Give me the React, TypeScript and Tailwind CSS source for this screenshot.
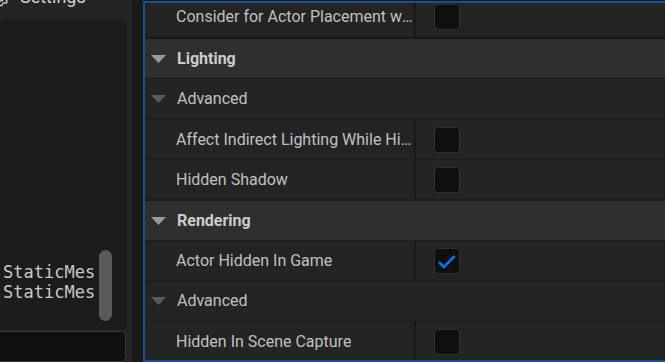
import { Settings } from 'lucide-react';

type Row =
  | { kind: 'header'; label: string; cls: string }
  | { kind: 'sub'; label: string; cls: string }
  | { kind: 'prop'; label: string; checked: boolean; cls: string };

const rows: Row[] = [
  { kind: 'prop', label: 'Consider for Actor Placement when Hovering', checked: false, cls: 'h-[42px] -mt-[6px] border-b-2' },
  { kind: 'header', label: 'Lighting', cls: 'h-[40px] border-b' },
  { kind: 'sub', label: 'Advanced', cls: 'h-[41px] border-b' },
  { kind: 'prop', label: 'Affect Indirect Lighting While Hidden', checked: false, cls: 'h-[40px] border-b' },
  { kind: 'prop', label: 'Hidden Shadow', checked: false, cls: 'h-[41px] border-b-2' },
  { kind: 'header', label: 'Rendering', cls: 'h-[40px] border-b' },
  { kind: 'prop', label: 'Actor Hidden In Game', checked: true, cls: 'h-[40px] border-b' },
  { kind: 'sub', label: 'Advanced', cls: 'h-[41px] border-b' },
  { kind: 'prop', label: 'Hidden In Scene Capture', checked: false, cls: 'h-[40px] border-b' },
];

function Arrow({ light }: { light?: boolean }) {
  return (
    <svg width="15" height="8" viewBox="0 0 15 8" className="ml-[6px] mr-[11px] shrink-0">
      <path d="M0 0 H15 L7.5 8 Z" fill={light ? '#9a9a9a' : '#5a5a5a'} />
    </svg>
  );
}

function Checkbox({ checked }: { checked: boolean }) {
  return (
    <div className="ml-[18px] w-[26px] h-[26px] rounded-[4px] border border-[#303030] bg-[#0f0f0f] flex items-center justify-center">
      {checked && (
        <svg width="26" height="26" viewBox="0 0 26 26">
          <path d="M5 15 L9.5 19.5 L20.5 8.5" fill="none" stroke="#0a72e0" strokeWidth="3" strokeLinecap="round" strokeLinejoin="round" />
        </svg>
      )}
    </div>
  );
}

function DetailRow({ row }: { row: Row }) {
  if (row.kind === 'header') {
    return (
      <div className={`${row.cls} shrink-0 border-[#1a1a1a] bg-[#2f2f2f] flex items-center`}>
        <Arrow light />
        <span className="text-[16px] font-bold text-[#cccccc]">{row.label}</span>
      </div>
    );
  }
  if (row.kind === 'sub') {
    return (
      <div className={`${row.cls} shrink-0 border-[#1a1a1a] bg-[#242424] flex items-center`}>
        <Arrow />
        <span className="text-[16px] text-[#c0c0c0]">{row.label}</span>
      </div>
    );
  }
  return (
    <div className={`${row.cls} shrink-0 border-[#1a1a1a] bg-[#242424] flex items-stretch`}>
      <div className="w-[271px] pl-[31px] flex items-center border-r-2 border-[#1a1a1a]">
        <span className="text-[16px] text-[#c0c0c0] truncate">{row.label}</span>
      </div>
      <div className="flex items-center">
        <Checkbox checked={row.checked} />
      </div>
    </div>
  );
}

export default function App() {
  return (
    <div
      className="w-[665px] h-[362px] overflow-hidden flex bg-[#191919]"
      style={{ fontFamily: 'Roboto, "Noto Sans", sans-serif' }}
    >
      {/* outliner side */}
      <div className="w-[132px] shrink-0 bg-[#242424] flex flex-col">
        <div className="h-[19px] shrink-0 overflow-hidden">
          <div className="-mt-[14px] flex items-center text-[#d0d0d0]">
            <Settings size={16} className="-ml-[7px] mt-[3px]" />
            <span className="ml-[11px] text-[18px] leading-[22px]">Settings</span>
          </div>
        </div>
        <div className="flex-1 mr-[5px] rounded-[4px] bg-[#1c1c1c] flex">
          <div
            className="w-[95px] pl-[3px] pt-[243px] overflow-hidden whitespace-nowrap text-[17px] leading-[20px] text-[#c8c8c8]"
            style={{ fontFamily: '"DejaVu Sans Mono", monospace' }}
          >
            <div>StaticMeshActor_7</div>
            <div>StaticMeshActor_8</div>
          </div>
          <div className="ml-[4px] mt-[231px] w-[13px] h-[71px] rounded-full bg-[#5a5a5a]" />
        </div>
        <div className="h-[31px] mt-[1px] mr-[6px] -ml-[4px] shrink-0 rounded-[5px] border border-[#363636] bg-[#0f0f0f]" />
      </div>

      {/* details panel */}
      <div className="ml-[11px] mt-[1px] w-[540px] h-[361px] shrink-0 border-2 border-[#1b4f94] bg-[#242424] overflow-hidden flex flex-col">
        {rows.map((row, i) => (
          <DetailRow key={i} row={row} />
        ))}
      </div>
    </div>
  );
}
